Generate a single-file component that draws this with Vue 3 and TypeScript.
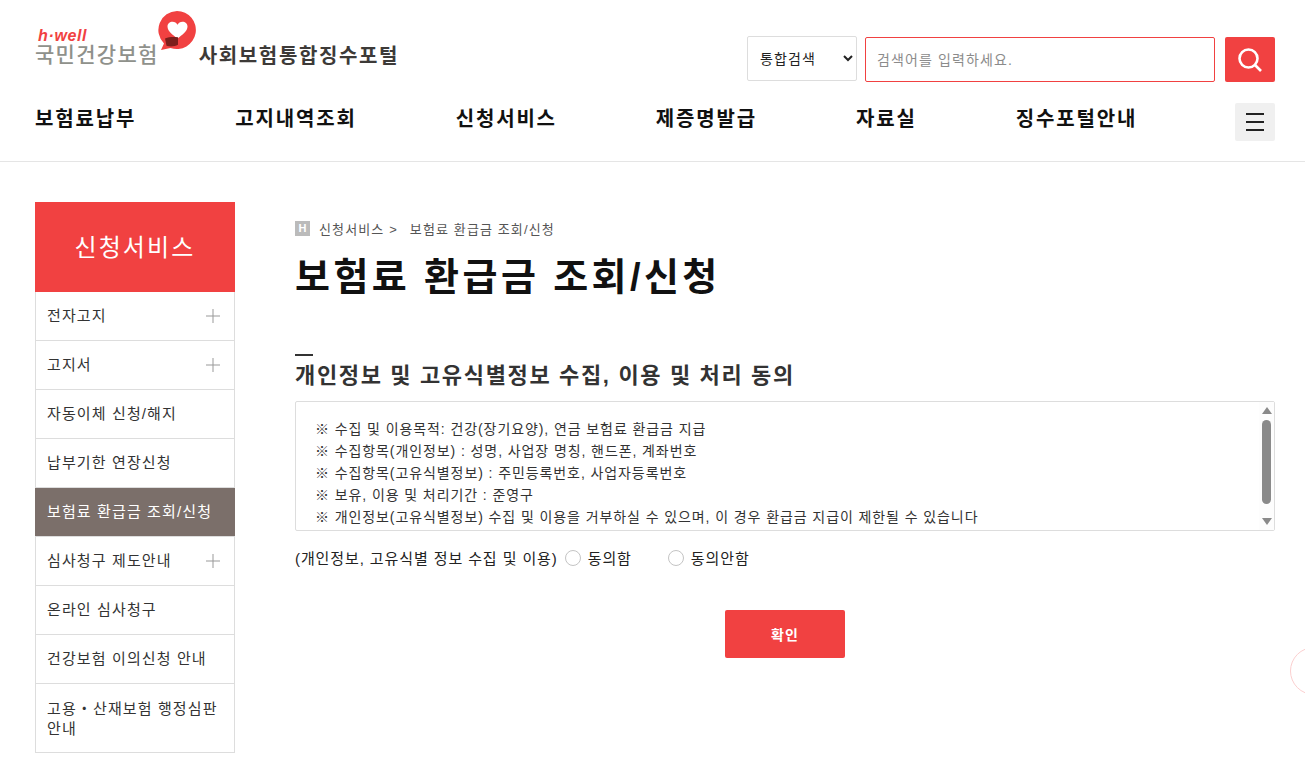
<template>
    <div class="page">
        <header class="site-header">
            <div class="top-row">
                <a class="logo">
                    <span class="logo-text">
                        <em class="logo-en">h·well</em>
                        <span class="logo-ko">국민건강보험</span>
                    </span>
                    <svg class="logo-mark" width="40" height="40" viewBox="0 0 40 40">
                        <path d="M20 0a19 19 0 1 1-6.500 36.900L4 39l3-6.500A19 19 0 0 1 20 0z" fill="#f14141" />
                        <path d="M20.500 27.500C16 24 10.500 20.500 10.500 15.500c0-2.800 2.400-4.800 5-4.800 2.200 0 4 1.100 5 3 1-1.900 2.800-3 5-3 2.600 0 5 2 5 4.800 0 5-5.500 8.500-10 12z" fill="#fff" />
                        <path d="M8 27.500c4-1.600 8.500-1.800 13-1.200v7.500c-2 1-4.500 1.700-7 1.700-1.500 0-3-.3-4.500-.8z" fill="#7d1f1c" />
                    </svg>
                    <span class="portal-name">사회보험통합징수포털</span>
                </a>
                <form class="search" @submit.prevent>
                    <select class="search-type">
                        <option>통합검색</option>
                    </select>
                    <input class="search-input" type="text" placeholder="검색어를 입력하세요." />
                    <button class="search-btn" aria-label="검색">
                        <svg width="26" height="26" viewBox="0 0 26 26" fill="none" stroke="#fff" stroke-width="2.600">
                            <circle cx="11.500" cy="11.500" r="9" />
                            <path d="M18 18l6 6" />
                        </svg>
                    </button>
                </form>
            </div>
            <nav class="gnb">
                <div class="gnb-list">
                    <a v-for="m in gnb" :key="m" class="gnb-item">{{ m }}</a>
                </div>
                <button class="all-menu" aria-label="전체메뉴">
                    <i></i><i></i><i></i>
                </button>
            </nav>
        </header>

        <div class="body-wrap">
            <aside class="side">
                <h2 class="side-title">신청서비스</h2>
                <ul class="side-menu">
                    <li
                        v-for="item in sideMenu"
                        :key="item.label"
                        :class="['side-item', { active: item.active }]"
                    >
                        <span>{{ item.label }}</span>
                        <svg v-if="item.sub" class="plus" width="14" height="14" viewBox="0 0 14 14">
                            <path d="M7 0v14M0 7h14" stroke="#999" stroke-width="1" fill="none" />
                        </svg>
                    </li>
                </ul>
            </aside>

            <main class="content">
                <div class="crumb">
                    <span class="crumb-home">H</span>
                    <span>신청서비스 &gt;</span>
                    <span class="crumb-cur">보험료 환급금 조회/신청</span>
                </div>
                <h1 class="page-title">보험료 환급금 조회/신청</h1>

                <h3 class="sec-title">개인정보 및 고유식별정보 수집, 이용 및 처리 동의</h3>
                <div class="terms">
                    <div class="terms-text">
                        <p v-for="line in terms" :key="line">{{ line }}</p>
                    </div>
                    <div class="scroll-bar">
                        <span class="arrow up"></span>
                        <span class="thumb"></span>
                        <span class="arrow down"></span>
                    </div>
                </div>

                <div class="agree-row">
                    <span>(개인정보, 고유식별 정보 수집 및 이용)</span>
                    <label class="radio">
                        <input v-model="agree" type="radio" value="Y" />
                        <span>동의함</span>
                    </label>
                    <label class="radio">
                        <input v-model="agree" type="radio" value="N" />
                        <span>동의안함</span>
                    </label>
                </div>

                <div class="btn-row">
                    <button class="confirm">확인</button>
                </div>
            </main>
        </div>

        <!-- 오른쪽 플로팅 버튼 -->
        <div class="float-circle"></div>
    </div>
</template>

<script setup lang="ts">
import { ref } from 'vue'

interface SideItem {
    label: string
    sub?: boolean
    active?: boolean
}

const agree = ref('')

const gnb = ['보험료납부', '고지내역조회', '신청서비스', '제증명발급', '자료실', '징수포털안내']

const sideMenu: SideItem[] = [
    { label: '전자고지', sub: true },
    { label: '고지서', sub: true },
    { label: '자동이체 신청/해지' },
    { label: '납부기한 연장신청' },
    { label: '보험료 환급금 조회/신청', active: true },
    { label: '심사청구 제도안내', sub: true },
    { label: '온라인 심사청구' },
    { label: '건강보험 이의신청 안내' },
    { label: '고용・산재보험 행정심판 안내' },
]

const terms = [
    '※ 수집 및 이용목적: 건강(장기요양), 연금 보험료 환급금 지급',
    '※ 수집항목(개인정보) : 성명, 사업장 명칭, 핸드폰, 계좌번호',
    '※ 수집항목(고유식별정보) : 주민등록번호, 사업자등록번호',
    '※ 보유, 이용 및 처리기간 : 준영구',
    '※ 개인정보(고유식별정보) 수집 및 이용을 거부하실 수 있으며, 이 경우 환급금 지급이 제한될 수 있습니다',
]
</script>

<style>
html,
body {
    overflow: hidden;
    background: #fff;
}
</style>

<style scoped>
.page {
    font-family: 'Liberation Sans', 'Noto Sans CJK KR', sans-serif;
    color: #222;
    font-size: 14px;
    letter-spacing: 0.08em;
}

/* 헤더 */
.site-header {
    height: 162px;
    box-sizing: border-box;
    border-bottom: 1px solid #e5e5e5;
    padding: 0 30px 0 35px;
}
.top-row {
    display: flex;
    justify-content: space-between;
    align-items: flex-start;
    height: 103px;
}
.logo {
    display: flex;
    align-items: flex-start;
    padding-top: 11px;
}
.logo-text {
    display: flex;
    flex-direction: column;
    margin-top: 18px;
}
.logo-en {
    font-size: 16px;
    line-height: 14px;
    font-weight: 700;
    color: #f14141;
    padding-left: 3px;
    letter-spacing: 0.04em;
}
.logo-ko {
    font-size: 21px;
    line-height: 24px;
    font-weight: 500;
    color: #8f918b;
    letter-spacing: 1.3px;
    white-space: nowrap;
}
.logo-mark {
    flex-shrink: 0;
    margin-left: -2px;
}
.portal-name {
    font-size: 20px;
    line-height: 28px;
    font-weight: 700;
    letter-spacing: 0.082em;
    color: #3d3a38;
    margin: 31px 0 0 2px;
    white-space: nowrap;
}
.search {
    display: flex;
    align-items: flex-start;
    padding-top: 36px;
}
.search-type {
    width: 110px;
    height: 45px;
    box-sizing: border-box;
    border: 1px solid #ddd;
    border-radius: 2px;
    background: #fff;
    padding-left: 8px;
    font: inherit;
    font-size: 14px;
    letter-spacing: 0.08em;
    color: #222;
}
.search-input {
    width: 350px;
    height: 45px;
    box-sizing: border-box;
    margin: 1px 0 0 8px;
    border: 1px solid #f14141;
    border-radius: 2px;
    padding: 0 11px;
    font: inherit;
    font-size: 14px;
    letter-spacing: 0.08em;
    outline: none;
}
.search-input::placeholder {
    color: #8b8b8b;
}
.search-btn {
    width: 50px;
    height: 45px;
    margin: 1px 0 0 10px;
    border: 0;
    border-radius: 2px;
    background: #f14141;
    display: flex;
    align-items: center;
    justify-content: center;
    padding: 0;
}

.gnb {
    display: flex;
    align-items: center;
    justify-content: space-between;
    height: 38px;
}
.gnb-list {
    display: flex;
    gap: 99px;
}
.gnb-item {
    font-size: 20px;
    font-weight: 700;
    letter-spacing: 0.092em;
    color: #111;
    line-height: 30px;
    margin-top: -6px;
    white-space: nowrap;
}
.all-menu {
    flex-shrink: 0;
    width: 40px;
    height: 38px;
    border: 0;
    border-radius: 2px;
    background: #f0f0f0;
    display: flex;
    flex-direction: column;
    align-items: center;
    justify-content: center;
    gap: 6px;
    padding: 0;
}
.all-menu i {
    display: block;
    width: 18px;
    height: 2px;
    background: #222;
}

/* 본문 */
.body-wrap {
    display: flex;
    gap: 60px;
    padding: 40px 30px 0 35px;
}

.side {
    width: 200px;
    flex-shrink: 0;
}
.side-title {
    margin: 0;
    height: 90px;
    box-sizing: border-box;
    padding-bottom: 3px;
    background: #f14141;
    color: #fff;
    font-size: 24px;
    font-weight: 400;
    letter-spacing: 0.09em;
    display: flex;
    align-items: center;
    justify-content: center;
}
.side-menu {
    list-style: none;
    margin: 0;
    padding: 0;
    border: 1px solid #ddd;
    border-top: 0;
}
.side-item {
    min-height: 48px;
    display: flex;
    align-items: center;
    justify-content: space-between;
    padding: 0 14px 0 11px;
    border-bottom: 1px solid #ddd;
    font-size: 15px;
    line-height: 20px;
    color: #333;
}
.side-item:last-child {
    border-bottom: 0;
    padding-top: 15px;
    padding-bottom: 13px;
    min-height: 40px;
}
.side-item.active {
    background: #7b6f6a;
    color: #fff;
    margin: 0 -1px;
    padding-left: 12px;
}

.content {
    flex: 1;
    min-width: 0;
}
.crumb {
    display: flex;
    align-items: center;
    height: 18px;
    margin-top: 17px;
    font-size: 13px;
    color: #555;
}
.crumb-home {
    width: 15px;
    height: 15px;
    background: #bbb;
    color: #fff;
    font-size: 11px;
    font-weight: 700;
    letter-spacing: 0;
    display: flex;
    align-items: center;
    justify-content: center;
    margin-right: 9px;
}
.crumb-cur {
    margin-left: 12px;
}
.page-title {
    margin: 12px 0 0;
    font-size: 38px;
    line-height: 56px;
    font-weight: 700;
    letter-spacing: 0.09em;
    color: #111;
}
.sec-title {
    margin: 49px 0 0;
    font-size: 22px;
    line-height: 34px;
    font-weight: 700;
    letter-spacing: 0.075em;
    color: #333;
    position: relative;
    padding-top: 5px;
}
.sec-title::before {
    content: '';
    position: absolute;
    left: 0;
    top: 0;
    width: 18px;
    height: 2px;
    background: #333;
}
.terms {
    margin-top: 8px;
    height: 130px;
    box-sizing: border-box;
    border: 1px solid #ddd;
    border-radius: 2px;
    display: flex;
    justify-content: space-between;
}
.terms-text {
    padding: 16px 0 0 19px;
    font-size: 14px;
    line-height: 22px;
    letter-spacing: 0.065em;
    color: #333;
}
.terms-text p {
    margin: 0;
}
.scroll-bar {
    width: 15px;
    padding: 5px 0;
    box-sizing: border-box;
    background: #fdfdfd;
    display: flex;
    flex-direction: column;
    align-items: center;
}
.thumb {
    width: 9px;
    height: 84px;
    border-radius: 5px;
    background: #8a8a8a;
    margin-top: 6px;
}
.arrow {
    width: 0;
    height: 0;
    border-left: 5px solid transparent;
    border-right: 5px solid transparent;
}
.arrow.up {
    border-bottom: 7px solid #8a8a8a;
}
.arrow.down {
    border-top: 7px solid #8a8a8a;
    margin-top: auto;
}

.agree-row {
    display: flex;
    align-items: center;
    height: 20px;
    margin-top: 16px;
    font-size: 15px;
    letter-spacing: 0.06em;
    color: #222;
}
.radio {
    display: flex;
    align-items: center;
    gap: 7px;
    margin-left: 7px;
    margin-right: 29px;
}
.radio input {
    appearance: none;
    width: 16px;
    height: 16px;
    margin: 2px 0 0;
    border: 1px solid #c4c4c4;
    border-radius: 50%;
    background: #fff;
}
.radio input:checked {
    border: 5px solid #f14141;
}

.btn-row {
    display: flex;
    justify-content: center;
    margin-top: 43px;
}
.confirm {
    width: 120px;
    height: 48px;
    border: 0;
    border-radius: 2px;
    background: #f14141;
    color: #fff;
    font: inherit;
    font-size: 14px;
    font-weight: 700;
    letter-spacing: 0.08em;
}

.float-circle {
    position: fixed;
    left: 1290px;
    top: 647px;
    width: 48px;
    height: 48px;
    box-sizing: border-box;
    border: 1px solid #fbcfcf;
    border-radius: 50%;
    background: #fff;
}
</style>
